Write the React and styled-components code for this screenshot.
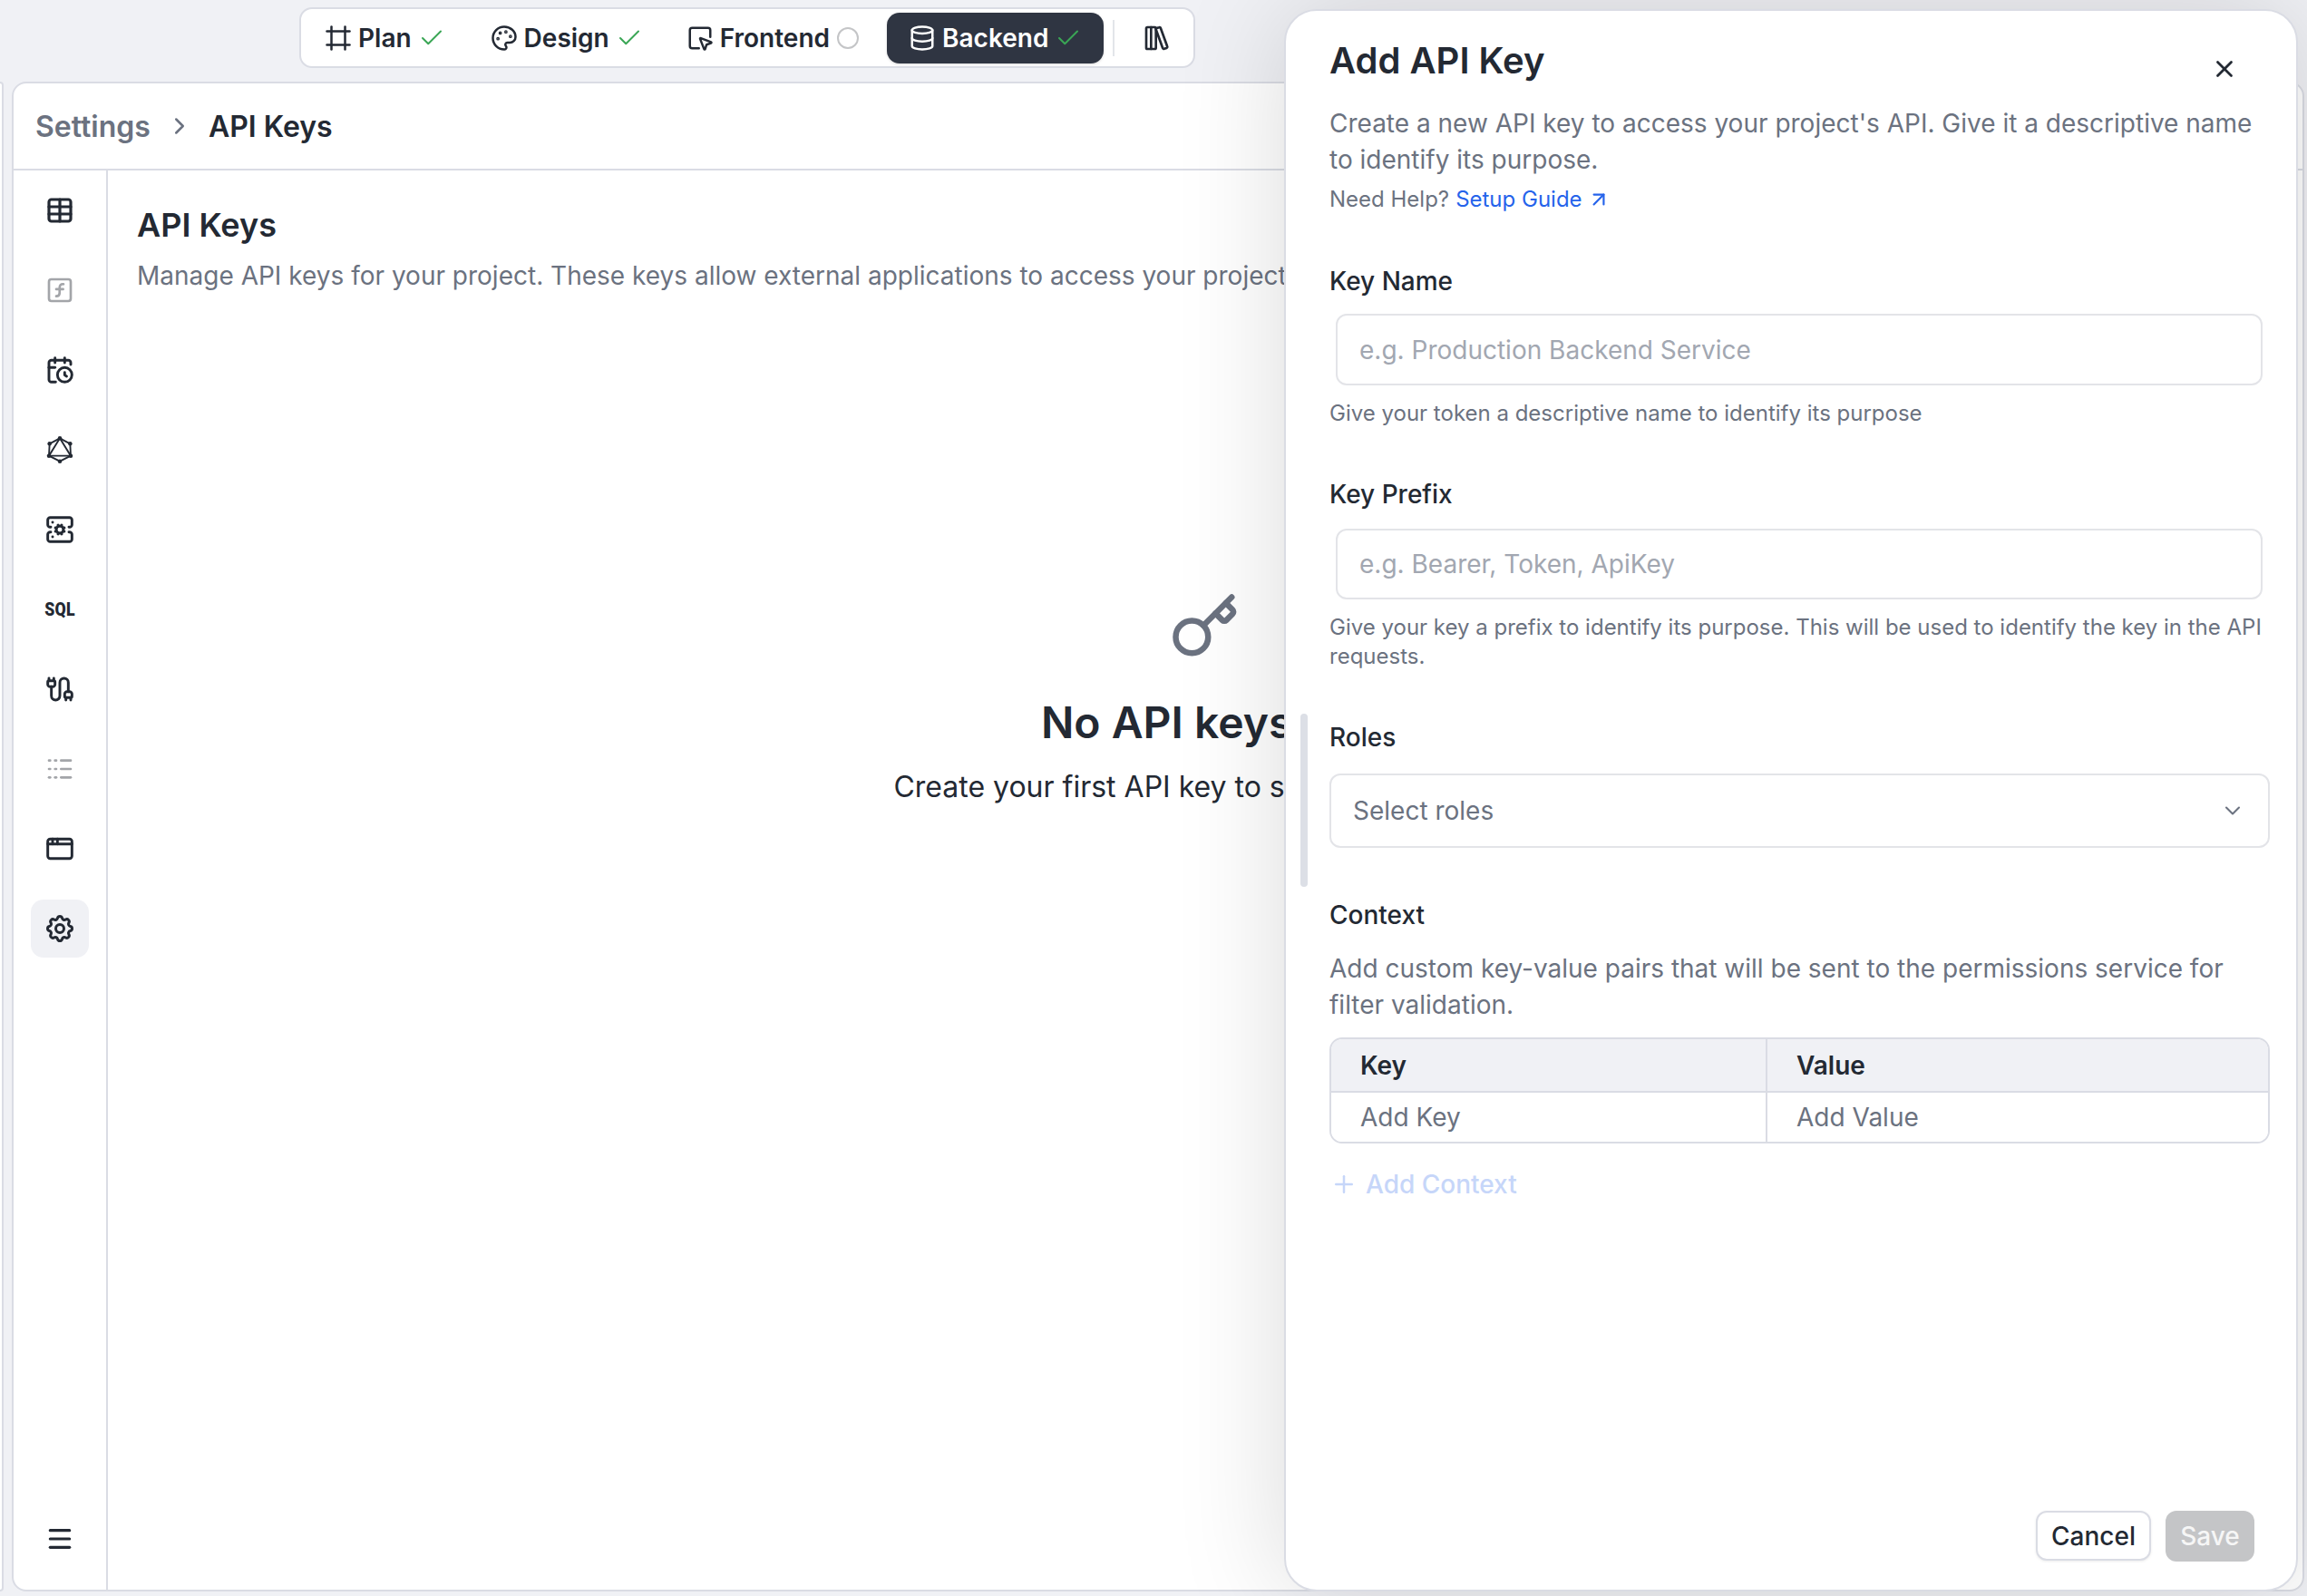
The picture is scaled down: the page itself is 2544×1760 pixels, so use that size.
import React from "react";
import styled, { createGlobalStyle } from "styled-components";
import {
  AppWindow,
  ArrowUpRight,
  Cable,
  CalendarClock,
  Check,
  ChevronDown,
  ChevronRight,
  Database,
  Frame,
  Key,
  LibraryBig,
  Logs,
  Menu,
  Palette,
  Plus,
  ServerCog,
  SquareFunction,
  SquareMousePointer,
  Table,
  X,
} from "lucide-react";
import { TbSettings } from "react-icons/tb";

const COLORS = {
  bg: "#f0f1f5",
  line: "#dadce4",
  dark: "#232933",
  pill: "#2f3542",
  gray: "#6b7280",
  placeholder: "#a2a7b1",
  green: "#3aa655",
  blue: "#2563eb",
};

const GlobalStyle = createGlobalStyle`
  html, body {
    margin: 0;
    padding: 0;
    background: ${COLORS.bg};
  }
  * {
    box-sizing: border-box;
  }
  body {
    font-family: "Inter", "Liberation Sans", sans-serif;
    color: ${COLORS.dark};
  }
`;

const Page = styled.div`
  position: relative;
  width: 2544px;
  height: 1760px;
  overflow: hidden;
  display: flex;
  flex-direction: column;
  background: ${COLORS.bg};
`;

const TopBar = styled.div`
  display: flex;
  align-items: center;
  width: 988px;
  height: 67px;
  margin: 8px 0 0 330px;
  padding: 0 4px 0 26px;
  background: #fff;
  border: 2px solid ${COLORS.line};
  border-radius: 14px;
  flex-shrink: 0;
`;

const Step = styled.div`
  display: flex;
  align-items: center;
  height: 56px;
  margin-left: ${(p) => p.$offset || 0}px;
  padding: 0 ${(p) => (p.$active ? 24 : 0)}px;
  border-radius: 14px;
  font-size: 28px;
  font-weight: 600;
  color: ${(p) => (p.$active ? "#fff" : COLORS.dark)};
  background: ${(p) => (p.$active ? COLORS.pill : "transparent")};
  box-shadow: ${(p) => (p.$active ? "0 1px 3px rgba(0,0,0,0.15)" : "none")};
`;

const StepLabel = styled.span`
  margin: 0 7px;
`;

const PendingDot = styled.span`
  display: block;
  width: 24px;
  height: 24px;
  margin-left: 1px;
  border: 2px solid #c4c5c7;
  border-radius: 50%;
`;

const BarDivider = styled.div`
  width: 2px;
  height: 40px;
  margin: 0 31px 0 10px;
  background: #e3e5ea;
`;

const Stage = styled.div`
  flex: 1;
  display: flex;
  min-height: 0;
  margin: 15px 0 5px;
`;

const LeftPeek = styled.div`
  width: 4px;
  margin-right: 9px;
  background: #fff;
  border: 2px solid ${COLORS.line};
  border-left: none;
  border-radius: 0 10px 10px 0;
`;

const Panel = styled.div`
  flex: 1;
  display: flex;
  flex-direction: column;
  min-width: 0;
  margin-right: 3px;
  background: #fff;
  border: 2px solid ${COLORS.line};
  border-radius: 16px;
  overflow: hidden;
`;

const PanelHeader = styled.div`
  display: flex;
  align-items: center;
  height: 96px;
  padding-left: 24px;
  border-bottom: 2px solid ${COLORS.line};
  font-size: 32px;
  font-weight: 600;
  flex-shrink: 0;
`;

const Crumb = styled.span`
  color: ${(p) => (p.$muted ? COLORS.gray : COLORS.dark)};
`;

const CrumbArrow = styled.span`
  display: flex;
  margin: 0 17px;
  color: ${COLORS.gray};
`;

const PanelBody = styled.div`
  flex: 1;
  display: flex;
  min-height: 0;
`;

const Sidebar = styled.nav`
  width: 104px;
  display: flex;
  flex-direction: column;
  align-items: center;
  gap: 24px;
  padding: 12px 0 24px;
  border-right: 2px solid ${COLORS.line};
  flex-shrink: 0;
`;

const NavItem = styled.div`
  width: 64px;
  height: 64px;
  display: flex;
  align-items: center;
  justify-content: center;
  border-radius: 14px;
  margin-top: ${(p) => (p.$bottom ? "auto" : 0)};
  color: ${(p) => (p.$dim ? "#a3a5a9" : COLORS.dark)};
  background: ${(p) => (p.$active ? COLORS.bg : "transparent")};
`;

const SqlMark = styled.span`
  display: inline-block;
  font-family: "Roboto", "Liberation Sans", sans-serif;
  font-size: 21px;
  font-weight: 900;
  letter-spacing: 0.4px;
  transform: scaleX(0.84);
  color: ${COLORS.dark};
`;

const Content = styled.main`
  flex: 1;
  min-width: 0;
  padding: 34px 32px 0;
  white-space: nowrap;
`;

const PageTitle = styled.h1`
  margin: 0;
  font-size: 36px;
  line-height: 52px;
  font-weight: 600;
`;

const PageDesc = styled.p`
  margin: 10px 0 0;
  font-size: 28px;
  line-height: 40px;
  color: ${COLORS.gray};
`;

const Empty = styled.div`
  display: flex;
  flex-direction: column;
  align-items: center;
  margin-top: 328px;
  color: ${COLORS.dark};
`;

const EmptyIcon = styled.div`
  display: flex;
  color: ${COLORS.gray};
`;

const EmptyTitle = styled.h2`
  margin: 35px 0 0;
  font-size: 48px;
  line-height: 64px;
  font-weight: 600;
`;

const EmptyText = styled.p`
  margin: 17px 0 0;
  padding-left: 4px;
  font-size: 32px;
  line-height: 44px;
`;

const Drawer = styled.aside`
  position: absolute;
  top: 10px;
  left: 1416px;
  width: 1118px;
  bottom: 5px;
  display: flex;
  flex-direction: column;
  padding: 31px 29px 31px 48px;
  background: #fff;
  border: 2px solid ${COLORS.line};
  border-radius: 36px;
  box-shadow: 0 0 120px rgba(0, 0, 0, 0.15);
`;

const ScrollThumb = styled.div`
  position: absolute;
  left: 16px;
  top: 775px;
  width: 8px;
  height: 191px;
  border-radius: 4px;
  background: #dcdfe6;
`;

const CloseButton = styled.div`
  position: absolute;
  top: 49px;
  right: 64px;
  display: flex;
  color: ${COLORS.dark};
`;

const DrawerTitle = styled.h2`
  margin: 0;
  font-size: 40px;
  line-height: 47px;
  font-weight: 600;
`;

const DrawerDesc = styled.p`
  margin: ${(p) => p.$top}px 0 0;
  font-size: 28px;
  line-height: 40px;
  color: ${COLORS.gray};
`;

const HelpLine = styled.div`
  display: flex;
  align-items: center;
  margin-top: 7px;
  font-size: 24px;
  line-height: 33px;
  color: ${COLORS.gray};
`;

const GuideLink = styled.a`
  display: flex;
  align-items: center;
  gap: 5px;
  margin-left: 7px;
  color: ${COLORS.blue};
`;

const Label = styled.label`
  display: block;
  margin-top: ${(p) => p.$top}px;
  font-size: 28px;
  line-height: 40px;
  font-weight: 500;
  color: ${COLORS.dark};
`;

const TextInput = styled.input`
  display: block;
  width: 1022px;
  height: ${(p) => p.$height}px;
  margin: ${(p) => p.$top}px 0 0 7px;
  padding: 0 24px;
  background: #fff;
  border: 2px solid #e3e4e8;
  border-radius: 12px;
  font-family: inherit;
  font-size: 28px;
  outline: none;
  &::placeholder {
    color: ${COLORS.placeholder};
    opacity: 1;
  }
`;

const FieldHint = styled.p`
  width: 1036px;
  margin: 15px 0 0;
  font-size: 24px;
  line-height: 32px;
  color: ${COLORS.gray};
`;

const Select = styled.div`
  display: flex;
  align-items: center;
  justify-content: space-between;
  height: 82px;
  margin-top: 20px;
  padding: 0 25px 0 24px;
  border: 2px solid #e3e4e8;
  border-radius: 12px;
  font-size: 28px;
  color: ${COLORS.gray};
`;

const PairTable = styled.div`
  margin-top: 16px;
  border: 2px solid ${COLORS.line};
  border-radius: 14px;
  overflow: hidden;
`;

const PairRow = styled.div`
  display: grid;
  grid-template-columns: 481px 1fr;
  height: ${(p) => p.$height}px;
  background: ${(p) => (p.$head ? COLORS.bg : "#fff")};
  border-bottom: ${(p) => (p.$head ? `2px solid ${COLORS.line}` : "none")};
`;

const PairCell = styled.div`
  display: flex;
  align-items: center;
  padding-left: 32px;
  border-right: ${(p) => (p.$first ? `2px solid ${COLORS.line}` : "none")};
  font-size: 28px;
  font-weight: ${(p) => (p.$head ? 600 : 400)};
  color: ${(p) => (p.$head ? COLORS.dark : COLORS.gray)};
`;

const AddContext = styled.div`
  display: flex;
  align-items: center;
  gap: 9px;
  margin-top: 25px;
  padding-left: 1px;
  font-size: 28px;
  line-height: 40px;
  font-weight: 500;
  color: #c6d6f9;
`;

const Footer = styled.div`
  display: flex;
  justify-content: flex-end;
  gap: 16px;
  margin: auto 17px 0 0;
`;

const CancelButton = styled.div`
  width: 127px;
  height: 55px;
  display: flex;
  align-items: center;
  justify-content: center;
  background: #fff;
  border: 2px solid ${COLORS.line};
  border-radius: 12px;
  box-shadow: 0 1px 3px rgba(0, 0, 0, 0.08);
  font-size: 28px;
  font-weight: 500;
`;

const SaveButton = styled.div`
  width: 98px;
  height: 56px;
  display: flex;
  align-items: center;
  justify-content: center;
  background: #c4c5c7;
  border-radius: 12px;
  font-size: 28px;
  font-weight: 500;
  color: #f6f6f6;
`;

const GraphqlIcon = () => (
  <svg width="32" height="32" viewBox="0 0 24 24" fill="none" stroke="currentColor" strokeWidth="1.4">
    <path d="M12 2.5 20.5 7 21 17l-9 4.5L3 17l.5-10z" />
    <path d="M12 2.5 21 17H3z" />
    <g fill="currentColor" stroke="none">
      <circle cx="12" cy="2.5" r="1.7" />
      <circle cx="20.5" cy="7" r="1.7" />
      <circle cx="21" cy="17" r="1.7" />
      <circle cx="12" cy="21.5" r="1.7" />
      <circle cx="3" cy="17" r="1.7" />
      <circle cx="3.5" cy="7" r="1.7" />
    </g>
  </svg>
);

const StepIcon = { size: 30, strokeWidth: 2 };
const DoneIcon = { size: 30, strokeWidth: 1.6, color: COLORS.green };

const navItems = [
  { icon: <Table size={32} strokeWidth={2.4} /> },
  { icon: <SquareFunction size={32} strokeWidth={2} />, dim: true },
  { icon: <CalendarClock size={32} strokeWidth={2.2} /> },
  { icon: <GraphqlIcon /> },
  { icon: <ServerCog size={32} strokeWidth={2.2} /> },
  { icon: <SqlMark>SQL</SqlMark> },
  { icon: <Cable size={32} strokeWidth={2.2} /> },
  { icon: <Logs size={32} strokeWidth={2} />, dim: true },
  { icon: <AppWindow size={32} strokeWidth={2.2} /> },
  { icon: <TbSettings size={36} />, active: true },
];

const App = () => {
  return (
    <Page>
      <GlobalStyle />
      <TopBar>
        <Step>
          <Frame {...StepIcon} />
          <StepLabel>Plan</StepLabel>
          <Check {...DoneIcon} />
        </Step>
        <Step $offset={50}>
          <Palette {...StepIcon} />
          <StepLabel>Design</StepLabel>
          <Check {...DoneIcon} />
        </Step>
        <Step $offset={48}>
          <SquareMousePointer {...StepIcon} />
          <StepLabel>Frontend</StepLabel>
          <PendingDot />
        </Step>
        <Step $active $offset={31}>
          <Database {...StepIcon} />
          <StepLabel>Backend</StepLabel>
          <Check {...DoneIcon} />
        </Step>
        <BarDivider />
        <LibraryBig size={32} strokeWidth={2} />
      </TopBar>

      <Stage>
        <LeftPeek />
        <Panel>
          <PanelHeader>
            <Crumb $muted>Settings</Crumb>
            <CrumbArrow>
              <ChevronRight size={30} strokeWidth={2} />
            </CrumbArrow>
            <Crumb>API Keys</Crumb>
          </PanelHeader>
          <PanelBody>
            <Sidebar>
              {navItems.map((item, i) => (
                <NavItem key={i} $dim={item.dim} $active={item.active}>
                  {item.icon}
                </NavItem>
              ))}
              <NavItem $bottom>
                <Menu size={32} strokeWidth={2.4} />
              </NavItem>
            </Sidebar>
            <Content>
              <PageTitle>API Keys</PageTitle>
              <PageDesc>
                Manage API keys for your project. These keys allow external
                applications to access your project's data.
              </PageDesc>
              <Empty>
                <EmptyIcon>
                  <Key size={78} strokeWidth={2} />
                </EmptyIcon>
                <EmptyTitle>No API keys yet</EmptyTitle>
                <EmptyText>Create your first API key to start using the API</EmptyText>
              </Empty>
            </Content>
          </PanelBody>
        </Panel>
      </Stage>

      <Drawer>
        <ScrollThumb />
        <CloseButton>
          <X size={30} strokeWidth={2.2} />
        </CloseButton>
        <DrawerTitle>Add API Key</DrawerTitle>
        <DrawerDesc $top={26}>
          Create a new API key to access your project's API. Give it a descriptive name
          to identify its purpose.
        </DrawerDesc>
        <HelpLine>
          Need Help?
          <GuideLink>
            Setup Guide <ArrowUpRight size={26} strokeWidth={2} />
          </GuideLink>
        </HelpLine>

        <Label $top={54}>Key Name</Label>
        <TextInput $top={16} $height={79} placeholder="e.g. Production Backend Service" readOnly />
        <FieldHint>Give your token a descriptive name to identify its purpose</FieldHint>

        <Label $top={53}>Key Prefix</Label>
        <TextInput $top={18} $height={78} placeholder="e.g. Bearer, Token, ApiKey" readOnly />
        <FieldHint>
          Give your key a prefix to identify its purpose. This will be used to identify the
          key in the API requests.
        </FieldHint>

        <Label $top={53}>Roles</Label>
        <Select>
          Select roles
          <ChevronDown size={28} strokeWidth={1.8} />
        </Select>

        <Label $top={54}>Context</Label>
        <DrawerDesc $top={19}>
          Add custom key-value pairs that will be sent to the permissions service for
          filter validation.
        </DrawerDesc>
        <PairTable>
          <PairRow $head $height={59}>
            <PairCell $first $head>Key</PairCell>
            <PairCell $head>Value</PairCell>
          </PairRow>
          <PairRow $height={54}>
            <PairCell $first>Add Key</PairCell>
            <PairCell>Add Value</PairCell>
          </PairRow>
        </PairTable>
        <AddContext>
          <Plus size={30} strokeWidth={2} />
          Add Context
        </AddContext>

        <Footer>
          <CancelButton>Cancel</CancelButton>
          <SaveButton>Save</SaveButton>
        </Footer>
      </Drawer>
    </Page>
  );
};

export default App;
